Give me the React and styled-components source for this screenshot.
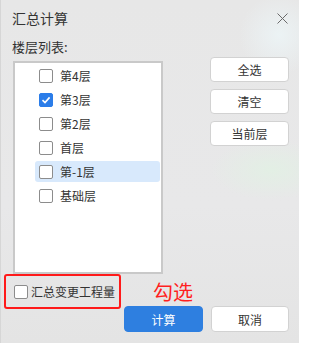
import React, { useState } from "react";
import styled, { createGlobalStyle } from "styled-components";

const GlobalStyle = createGlobalStyle`
  html, body {
    margin: 0;
    padding: 0;
  }
  body {
    font-family: "Noto Sans CJK SC", "Noto Sans", sans-serif;
    color: #333;
  }
`;

const floors = [
  { id: 4, name: "第4层" },
  { id: 3, name: "第3层" },
  { id: 2, name: "第2层" },
  { id: 1, name: "首层" },
  { id: -1, name: "第-1层" },
  { id: 0, name: "基础层" }
];

const Dialog = styled.div`
  width: 299px;
  height: 343px;
  box-sizing: border-box;
  border-left: 1px solid #d6d6d6;
  background-color: #e6e6e6;
  background-image: radial-gradient(
      ellipse 60px 30px at 270px 170px,
      rgba(226, 240, 228, 0.9),
      rgba(226, 240, 228, 0)
    ),
    radial-gradient(
      ellipse 40px 40px at 278px 35px,
      rgba(236, 244, 246, 0.9),
      rgba(236, 244, 246, 0)
    ),
    linear-gradient(180deg, #e7e7e7 0%, #e8e8e9 60%, #e4e4e4 100%);
  display: flex;
  flex-direction: column;
`;

const Header = styled.div`
  height: 34px;
  display: flex;
  align-items: center;
  justify-content: space-between;
  padding: 0 10px 0 11px;
`;

const Title = styled.div`
  font-size: 14px;
  line-height: 16px;
  margin-top: 2px;
  color: #333;
`;

const CloseBtn = styled.button`
  width: 14px;
  height: 14px;
  padding: 0;
  border: none;
  background: none;
  display: flex;
  align-items: center;
  justify-content: center;
  margin-top: 2px;
  cursor: pointer;
`;

const Label = styled.div`
  font-size: 13px;
  line-height: 16px;
  padding-left: 11px;
  margin-top: 5px;
`;

const Main = styled.div`
  display: flex;
  align-items: flex-start;
  padding: 0 10px 0 12px;
  margin-top: 2px;
`;

const ListBox = styled.div`
  width: 150px;
  height: 213px;
  box-sizing: border-box;
  margin-top: 4px;
  border: 2px solid #c9c9c9;
  background: #fff;
  padding: 2px 1px 0 20px;
  display: flex;
  flex-direction: column;
  gap: 3px;
`;

const Row = styled.label`
  height: 21px;
  display: flex;
  align-items: center;
  gap: 7px;
  padding-left: 4px;
  border-radius: 3px;
  font-size: 12px;
  background: ${(props) => (props.active ? "#d8e9fc" : "transparent")};
  cursor: pointer;
`;

const Box = styled.span`
  width: 14px;
  height: 14px;
  box-sizing: border-box;
  flex-shrink: 0;
  border-radius: 2px;
  border: 1px solid ${(props) => (props.checked ? "#2b7de9" : "#8c8c8c")};
  background: ${(props) => (props.checked ? "#2b7de9" : "#fff")};
  display: flex;
  align-items: center;
  justify-content: center;
`;

const SideButtons = styled.div`
  margin-left: auto;
  width: 79px;
  display: flex;
  flex-direction: column;
  gap: 7px;
`;

const Btn = styled.button`
  height: ${(props) => props.h || 25}px;
  width: ${(props) => props.w || 79}px;
  box-sizing: border-box;
  border-radius: 4px;
  border: 1px solid ${(props) => (props.primary ? "#2e7fe0" : "#d2d2d2")};
  background: ${(props) => (props.primary ? "#2e7fe0" : "#fff")};
  color: ${(props) => (props.primary ? "#fff" : "#333")};
  font-family: inherit;
  font-size: 12px;
  padding: 0;
  cursor: pointer;
`;

const Footer = styled.div`
  display: flex;
  align-items: flex-start;
  padding: 0 10px 0 3px;
`;

const Option = styled.label`
  width: 117px;
  height: 35px;
  box-sizing: border-box;
  border: 2px solid #ff1a1a;
  border-radius: 3px;
  display: flex;
  align-items: center;
  gap: 3px;
  padding-left: 8px;
  font-size: 12px;
  cursor: pointer;
`;

const Actions = styled.div`
  margin-left: auto;
  display: flex;
  flex-direction: column;
  padding-top: 6px;
`;

const Hint = styled.div`
  color: #ff1f1f;
  font-size: 20px;
  line-height: 24px;
  padding-left: 29px;
`;

const ButtonRow = styled.div`
  display: flex;
  gap: 8px;
  margin-top: 2px;
`;

const Check = () => (
  <svg width="10" height="10" viewBox="0 0 10 10">
    <path d="M1.5 5.2 L4 7.6 L8.6 2.4" fill="none" stroke="#fff" strokeWidth="1.6" />
  </svg>
);

const CloseIcon = () => (
  <svg width="11" height="11" viewBox="0 0 11 11">
    <path d="M0.5 0.5 L10.5 10.5 M10.5 0.5 L0.5 10.5" stroke="#6a6a6a" strokeWidth="1" />
  </svg>
);

const App = () => {
  const [selected, setSelected] = useState([3]);
  const [summary, setSummary] = useState(false);

  const toggle = (id) => {
    setSelected(
      selected.includes(id) ? selected.filter((s) => s !== id) : [...selected, id]
    );
  };

  return (
    <>
      <GlobalStyle />
      <Dialog>
        <Header>
          <Title>汇总计算</Title>
          <CloseBtn>
            <CloseIcon />
          </CloseBtn>
        </Header>
        <Label>楼层列表:</Label>
        <Main>
          <ListBox>
            {floors.map((f) => (
              <Row key={f.id} active={f.id === -1} onClick={() => toggle(f.id)}>
                <Box checked={selected.includes(f.id)}>
                  {selected.includes(f.id) && <Check />}
                </Box>
                {f.name}
              </Row>
            ))}
          </ListBox>
          <SideButtons>
            <Btn onClick={() => setSelected(floors.map((f) => f.id))}>全选</Btn>
            <Btn onClick={() => setSelected([])}>清空</Btn>
            <Btn>当前层</Btn>
          </SideButtons>
        </Main>
        <Footer>
          <Option onClick={() => setSummary(!summary)}>
            <Box checked={summary}>{summary && <Check />}</Box>
            汇总变更工程量
          </Option>
          <Actions>
            <Hint>勾选</Hint>
            <ButtonRow>
              <Btn primary h={26}>计算</Btn>
              <Btn h={26} w={78}>取消</Btn>
            </ButtonRow>
          </Actions>
        </Footer>
      </Dialog>
    </>
  );
};

export default App;
